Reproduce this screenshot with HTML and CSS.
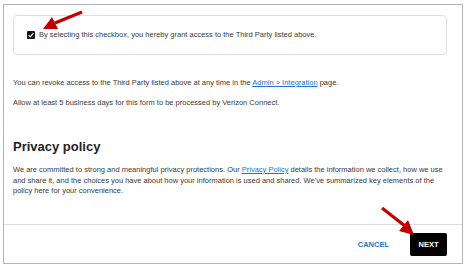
FILE: index.html
```html
<html>
<head>
    <title>Third Party Access</title>
<link rel="stylesheet" href="styles.css">
</head>
<body>

<div class="dialog">
  <div class="content">
    <div class="consent">
      <label class="check">
        <span class="box">
          <svg width="8" height="8" viewBox="0 0 8 8"><path d="M1.6 4.2 L3.2 5.8 L6.4 2.2" fill="none" stroke="#fff" stroke-width="1.2"/></svg>
        </span>
        By selecting this checkbox, you hereby grant access to the Third Party listed above.
      </label>
    </div>

    <p class="first">You can revoke access to the Third Party listed above at any time in the <a href="#">Admin &gt; Integration</a> page.</p>

    <p>Allow at least 5 business days for this form to be processed by Verizon Connect.</p>

    <h2>Privacy policy</h2>

    <p class="policy">We are committed to strong and meaningful privacy protections. Our <a href="#">Privacy Policy</a> details the information we collect, how we use<br>
      and share it, and the choices you have about how your information is used and shared. We've summarized key elements of the<br>
      policy here for your convenience.</p>
  </div>

  <div class="footer">
    <a href="#" class="cancel">CANCEL</a>
    <button class="next">NEXT</button>
  </div>

  <!-- red call-out arrows -->
  <svg class="arrow arrow-check" width="44" height="24" viewBox="0 0 44 24">
    <path d="M41 2 L14 13" stroke="#c00000" stroke-width="3.2" fill="none"/>
    <polygon points="2,19 11,7 17,19" fill="#c00000"/>
  </svg>
  <svg class="arrow arrow-next" width="40" height="34" viewBox="0 0 40 34">
    <path d="M3 2 L26 20" stroke="#c00000" stroke-width="3.2" fill="none"/>
    <polygon points="35,29 20,25 29,14" fill="#c00000"/>
  </svg>
</div>

</body>
</html>
```

FILE: styles.css
```css
body {
    margin: 0;
    background-color: white;
    font-family: "Liberation Sans", Arial, sans-serif;
    color: #3a3a3a;
}

.dialog {
    position: relative;
    box-sizing: border-box;
    margin: 4px 0 0 3px;
    width: 460px;
    height: 260px;
    border: 1px solid #b4b4b4;
    display: flex;
    flex-direction: column;
}

.content {
    flex: 1;
    padding: 10px 15px 0 9px;
    font-size: 7.5px;
    line-height: 10.5px;
}

.consent {
    box-sizing: border-box;
    height: 40px;
    border: 1px solid #dedede;
    border-radius: 4px;
    padding-left: 13px;
    display: flex;
    align-items: center;
}

.check {
    display: flex;
    align-items: center;
    gap: 4px;
}

.box {
    width: 8px;
    height: 8px;
    background-color: #111111;
    border-radius: 1px;
    display: flex;
}

p {
    margin: 9px 0 0 0;
}

p.first {
    margin-top: 23px;
}

p.policy {
    margin-top: 10px;
    white-space: nowrap;
}

a {
    color: #1a76c7;
}

h2 {
    margin: 31px 0 0 0;
    font-size: 13px;
    line-height: 16px;
    font-weight: bold;
    color: #222222;
}

.footer {
    height: 38px;
    border-top: 1px solid #dcdcdc;
    display: flex;
    align-items: center;
    justify-content: flex-end;
    gap: 21px;
    padding-right: 15px;
}

.cancel {
    font-size: 7.5px;
    font-weight: bold;
    text-decoration: none;
    color: #1a76c7;
}

.next {
    width: 37px;
    height: 23px;
    border: none;
    border-radius: 2px;
    background-color: black;
    color: white;
    font-family: "Liberation Sans", Arial, sans-serif;
    font-size: 7.5px;
    font-weight: bold;
    padding: 0;
}

.arrow {
    position: absolute;
}

.arrow-check {
    left: 37px;
    top: 5px;
}

.arrow-next {
    left: 375px;
    top: 201px;
}
```
